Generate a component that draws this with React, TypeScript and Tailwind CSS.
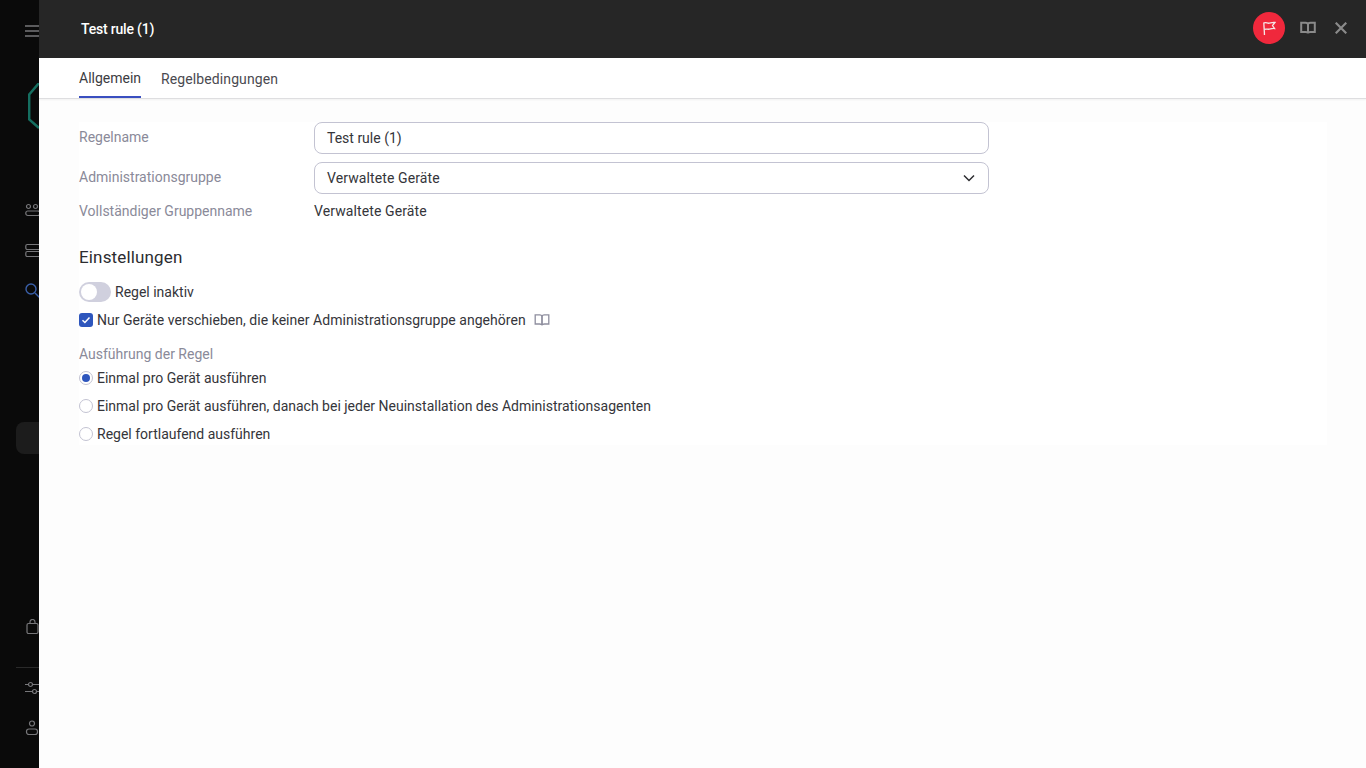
import React from "react";

const font = { fontFamily: 'Roboto, sans-serif' };

function Book({ className, stroke, sw = 1.3 }: { className?: string; stroke: string; sw?: number }) {
  return (
    <svg viewBox="0 0 16 16" width="16" height="16" fill="none" stroke={stroke} strokeWidth={sw} className={className}>
      <path d="M1.2 2.8h4.4c1.3 0 2.4.7 2.4 1.9v8.6c0-.8-1-1.3-2.4-1.3H1.2z" />
      <path d="M14.8 2.8h-4.4C9.1 2.8 8 3.5 8 4.7v8.6c0-.8 1-1.3 2.4-1.3h4.4z" />
    </svg>
  );
}

function Radio({ checked, label }: { checked?: boolean; label: string }) {
  return (
    <div className="flex h-[28px] items-center">
      <span className="mr-[4px] flex h-[14px] w-[14px] items-center justify-center rounded-full border border-[#c3c3d2] bg-white">
        {checked && <span className="h-[8px] w-[8px] rounded-full bg-[#2e56bd]" />}
      </span>
      <span className="text-[14px] text-[#35353a]">{label}</span>
    </div>
  );
}

export default function App() {
  return (
    <div className="relative h-[768px] w-[1366px] overflow-hidden bg-[#0a0a0a] antialiased" style={font}>
      {/* Sidebar behind the drawer */}
      <aside className="flex h-full w-[39px] flex-col overflow-hidden">
        <svg viewBox="0 0 16 16" width="16" height="16" className="ml-[25px] mt-[23px] shrink-0" stroke="#77777a" strokeWidth="1.4">
          <path d="M0 3h16M0 8h16M0 13h16" />
        </svg>
        <svg viewBox="0 0 44 52" width="44" height="52" fill="none" stroke="#156e60" strokeWidth="2.5" className="ml-[28px] mt-[44px] shrink-0">
          <path d="M11 0 L1.2 11.5 V36.5 L11 45" />
        </svg>
        <svg viewBox="0 0 16 16" width="16" height="16" fill="none" stroke="#77777a" strokeWidth="1.2" className="ml-[25px] mt-[68px] shrink-0">
          <circle cx="3.5" cy="3.5" r="2" />
          <circle cx="10.5" cy="3.5" r="2" />
          <rect x="0.8" y="8" width="14" height="4.5" rx="2" />
        </svg>
        <svg viewBox="0 0 16 16" width="16" height="16" fill="none" stroke="#77777a" strokeWidth="1.2" className="ml-[25px] mt-[24px] shrink-0">
          <rect x="0.8" y="1.5" width="14" height="5" rx="1.5" />
          <rect x="0.8" y="8.5" width="14" height="5" rx="1.5" />
        </svg>
        <svg viewBox="0 0 16 16" width="16" height="16" fill="none" stroke="#3a5fa8" strokeWidth="1.4" className="ml-[25px] mt-[24px] shrink-0">
          <circle cx="6" cy="6" r="5" />
          <path d="M10 10l5 5" />
        </svg>
        <div className="ml-[16px] mt-[123px] h-[32px] w-[40px] shrink-0 rounded-[8px] bg-[#1c1c1c]" />
        <svg viewBox="0 0 16 16" width="16" height="16" fill="none" stroke="#77777a" strokeWidth="1.2" className="ml-[25px] mt-[165px] shrink-0">
          <rect x="2" y="4.5" width="11" height="10" rx="1.5" />
          <path d="M5 4.5V3a2.5 2.5 0 0 1 5 0v1.5" />
        </svg>
        <div className="ml-[16px] mt-[32px] h-px w-[30px] shrink-0 bg-[#2a2a2a]" />
        <svg viewBox="0 0 16 16" width="16" height="16" fill="none" stroke="#77777a" strokeWidth="1.2" className="ml-[25px] mt-[12px] shrink-0">
          <path d="M0 4.5h3.5M8 4.5h8M0 11.5h7M11.5 11.5H16" />
          <circle cx="5.5" cy="4.5" r="2" />
          <circle cx="9.5" cy="11.5" r="2" />
        </svg>
        <svg viewBox="0 0 16 16" width="16" height="16" fill="none" stroke="#77777a" strokeWidth="1.2" className="ml-[25px] mt-[24px] shrink-0">
          <circle cx="7" cy="3.5" r="2.5" />
          <rect x="1.5" y="9" width="11" height="5.5" rx="2.5" />
        </svg>
      </aside>

      {/* Drawer lying over the page */}
      <div className="absolute bottom-0 left-[39px] right-0 top-0 flex flex-col bg-[#fdfdfd]">
        <header className="flex h-[58px] shrink-0 items-center bg-[#262626] pb-[2px] pl-[42px] pr-[19px]">
          <h1 className="pt-[2px] text-[14px] font-medium tracking-[-0.2px] text-white">Test rule (1)</h1>
          <div className="ml-auto flex items-center">
            <span className="flex h-[32px] w-[32px] items-center justify-center rounded-full bg-[#f0283c]">
              <svg viewBox="0 0 16 16" width="16" height="16" fill="none" stroke="#f5e8e8" strokeWidth="1.3">
                <path d="M3.5 15L2.8 2.5" />
                <path d="M2.9 3C5 2 6.5 3.6 8 3.2 10 2.8 12 2 14 2.5L11.5 5.5 13.5 8.5C11 8.2 9.5 9 8 9.2 6.2 9.4 5 8.6 3.3 9.4" />
              </svg>
            </span>
            <Book stroke="#8a8a8a" sw={2} className="ml-[15px]" />
            <svg viewBox="0 0 12 12" width="12" height="12" stroke="#8a8a8a" strokeWidth="2.2" className="ml-[19px]">
              <path d="M.7.7l10.6 10.6M11.3.7L.7 11.3" />
            </svg>
          </div>
        </header>

        <nav className="flex h-[41px] shrink-0 gap-[20px] border-b border-[#dedee0] bg-white pl-[40px] shadow-[0_1px_2px_rgba(0,0,0,0.05)]">
          <div className="flex h-[40px] items-center border-b-2 border-[#3a4fc0] pt-[3px] text-[14px] text-[#3c3c42]">Allgemein</div>
          <div className="flex h-[40px] items-center pt-[3px] text-[14px] tracking-[0.1px] text-[#4a4a50]">Regelbedingungen</div>
        </nav>

        <main className="ml-[40px] mr-[39px] mt-[23px] h-[323px] shrink-0 bg-white">
          <div className="grid grid-cols-[235px_675px] items-center">
            <label className="-mt-[2px] text-[14px] text-[#8a8a99]">Regelname</label>
            <div className="flex h-[32px] items-center rounded-[8px] border border-[#c3c3d2] bg-white px-[12px] text-[14px] text-[#35353a]">Test rule (1)</div>
            <label className="mt-[6px] text-[14px] text-[#8a8a99]">Administrationsgruppe</label>
            <div className="mt-[8px] flex h-[32px] items-center justify-between rounded-[8px] border border-[#c3c3d2] bg-white pl-[12px] pr-[13px] text-[14px] tracking-[0.1px] text-[#35353a]">
              Verwaltete Geräte
              <svg viewBox="0 0 12 8" width="12" height="8" fill="none" stroke="#2c2c30" strokeWidth="1.5">
                <path d="M1 1.5l5 5 5-5" />
              </svg>
            </div>
            <label className="mt-[7px] text-[14px] text-[#8a8a99]">Vollständiger Gruppenname</label>
            <div className="mt-[7px] text-[14px] tracking-[0.1px] text-[#35353a]">Verwaltete Geräte</div>
          </div>

          <h2 className="mt-[22px] text-[17px] font-normal leading-[26px] tracking-[0.15px] text-[#2c2c30]">Einstellungen</h2>

          <div className="mt-[10px] flex h-[24px] items-center">
            <span className="mr-[4px] flex h-[20px] w-[32px] items-center rounded-full bg-[#d0d0de] p-[2px]">
              <span className="h-[16px] w-[16px] rounded-full bg-white" />
            </span>
            <span className="text-[14px] text-[#35353a]">Regel inaktiv</span>
          </div>

          <div className="mt-[2px] flex h-[28px] items-center">
            <span className="mr-[4px] flex h-[14px] w-[14px] items-center justify-center rounded-[3px] bg-[#2e56bd]">
              <svg viewBox="0 0 10 10" width="10" height="10" fill="none" stroke="#fff" strokeWidth="1.5">
                <path d="M1.5 5.2l2.4 2.3 4.6-5" />
              </svg>
            </span>
            <span className="text-[14px] tracking-[0.03px] text-[#35353a]">Nur Geräte verschieben, die keiner Administrationsgruppe angehören</span>
            <Book stroke="#8e8e9e" className="ml-[8px]" />
          </div>

          <div className="mt-[10px] text-[14px] leading-[20px] text-[#8a8a99]">Ausführung der Regel</div>
          <div>
            <Radio checked label="Einmal pro Gerät ausführen" />
            <Radio label="Einmal pro Gerät ausführen, danach bei jeder Neuinstallation des Administrationsagenten" />
            <Radio label="Regel fortlaufend ausführen" />
          </div>
        </main>
      </div>
    </div>
  );
}
